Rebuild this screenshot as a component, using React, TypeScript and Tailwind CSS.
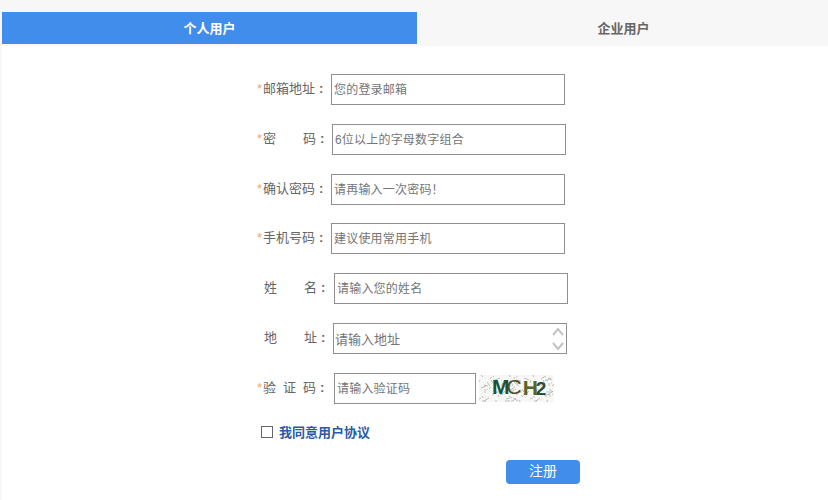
const FONT = "font-['Liberation_Sans','Noto_Sans_CJK_SC',sans-serif]";

const inputCls =
  "h-[31px] border border-[#8f8f8f] bg-white pl-[2px] text-[12px] tracking-[0.2px] outline-none placeholder:text-[#757575]";

function Star() {
  return <span className="w-[6px] text-[#f5a46b]">*</span>;
}

function Colon() {
  return <span className="ml-[4px] font-bold">:</span>;
}

function Label({ children, star = true, cls = "" }: { children: React.ReactNode; star?: boolean; cls?: string }) {
  return (
    <label className={`flex w-[74px] items-center whitespace-nowrap pb-[2px] text-[13px] text-[#666] ${cls}`}>
      {star ? <Star /> : <span className="w-[6px]" />}
      {children}
    </label>
  );
}

// scribble noise behind the code, same every render
const NOISE = Array.from({ length: 90 }, (_, i) => {
  const x = (i * 37) % 75;
  const y = (i * 23) % 27;
  const dx = ((i * 13) % 11) - 5;
  const dy = ((i * 7) % 9) - 4;
  return `M${x} ${y} l${dx} ${dy}`;
}).join(" ");

function Captcha() {
  return (
    <svg width="75" height="27" viewBox="0 0 75 27" className="ml-[3px] shrink-0">
      <rect width="75" height="27" fill="#f7f7f5" />
      <path d={NOISE} stroke="#a3a49f" strokeWidth="0.7" fill="none" />
      <text x="13" y="19" fontFamily="Liberation Sans" fontWeight="700" fontSize="21">
        <tspan fill="#14523c" letterSpacing="-3">M</tspan>
        <tspan fill="#4d4a25" fontWeight="400" letterSpacing="1">C</tspan>
        <tspan fill="#56642a" dy="1" letterSpacing="-2">H</tspan>
        <tspan fill="#274f3a" dy="0" fontSize="19">2</tspan>
      </text>
    </svg>
  );
}

export default function App() {
  return (
    <div className={`h-[500px] overflow-hidden bg-[#f7f7f7] pl-[2px] ${FONT}`}>
      <div className="flex h-[46px] items-start pt-3">
        <div className="flex h-[32px] w-[415px] items-center justify-center bg-[#418deb] pt-[1px] text-[13px] font-bold text-white">
          个人用户
        </div>
        <div className="flex h-[32px] flex-1 items-center justify-center pl-[2px] pt-[1px] text-[13px] font-bold text-[#666]">
          企业用户
        </div>
      </div>

      <div className="h-[454px] bg-white pl-[255px] pt-[28px]">
        <div className="flex items-center">
          <Label>
            邮箱地址
            <Colon />
          </Label>
          <input className={`${inputCls} w-[234px]`} placeholder="您的登录邮箱" />
        </div>

        <div className="mt-[19px] flex items-center">
          <Label cls="mr-[1px]">
            <span className="w-[40px]">密</span>码
            <Colon />
          </Label>
          <input className={`${inputCls} w-[234px]`} placeholder="6位以上的字母数字组合" />
        </div>

        <div className="mt-[19px] flex items-center">
          <Label>
            确认密码
            <Colon />
          </Label>
          <input className={`${inputCls} w-[234px]`} placeholder="请再输入一次密码！" />
        </div>

        <div className="mt-[18px] flex items-center">
          <Label>
            手机号码
            <Colon />
          </Label>
          <input className={`${inputCls} w-[234px]`} placeholder="建议使用常用手机" />
        </div>

        <div className="mt-[19px] flex items-center">
          <Label star={false} cls="mr-[3px]">
            <span className="ml-[1px] w-[40px]">姓</span>名
            <Colon />
          </Label>
          <input className={`${inputCls} w-[234px]`} placeholder="请输入您的姓名" />
        </div>

        <div className="mt-[19px] flex items-center">
          <Label star={false} cls="mr-[2px]">
            <span className="ml-[1px] w-[40px]">地</span>址
            <Colon />
          </Label>
          <div className="relative h-[31px] w-[234px]">
            <textarea
              rows={1}
              className="h-[31px] w-full resize-none overflow-hidden border border-[#8f8f8f] bg-white pl-[1px] pt-[8px] text-[13px] leading-[16px] outline-none placeholder:text-[#757575]"
              placeholder="请输入地址"
            />
            <svg width="14" height="27" viewBox="0 0 14 27" className="absolute right-[2px] top-[2px]">
              <path d="M2 10 L7 4 L12 10" stroke="#c2c2c2" strokeWidth="2" fill="none" />
              <path d="M2 18 L7 24 L12 18" stroke="#c2c2c2" strokeWidth="2" fill="none" />
            </svg>
          </div>
        </div>

        <div className="mt-[19px] flex items-center">
          <Label cls="mr-[3px]">
            验<span className="ml-[7px]">证</span>
            <span className="ml-[7px]">码</span>
            <Colon />
          </Label>
          <input className={`${inputCls} w-[142px]`} placeholder="请输入验证码" />
          <Captcha />
        </div>

        <div className="mt-[19px] flex items-center pl-[4px]">
          <span className="mb-[1px] h-[12px] w-[12px] border border-[#666] bg-white" />
          <span className="ml-[6px] text-[13px] font-bold text-[#2a5aa8]">我同意用户协议</span>
        </div>

        <button className="ml-[249px] mt-[17px] block h-[24px] w-[74px] rounded-[4px] bg-[#418deb] text-[14px] text-white">
          注册
        </button>
      </div>
    </div>
  );
}
